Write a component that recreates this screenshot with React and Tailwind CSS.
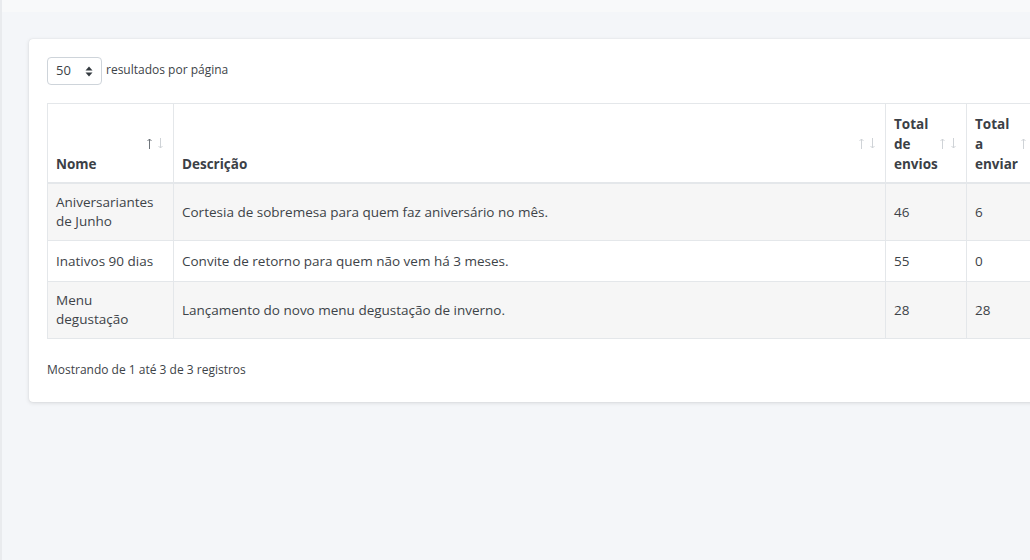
const rows = [
  { nome: 'Aniversariantes de Junho', descricao: 'Cortesia de sobremesa para quem faz aniversário no mês.', envios: 46, enviar: 6 },
  { nome: 'Inativos 90 dias', descricao: 'Convite de retorno para quem não vem há 3 meses.', envios: 55, enviar: 0 },
  { nome: 'Menu degustação', descricao: 'Lançamento do novo menu degustação de inverno.', envios: 28, enviar: 28 },
];

function Arrow({ down, color }) {
  return (
    <svg width="5" height="11" viewBox="0 0 5 11" className={color} fill="none" stroke="currentColor" strokeWidth="1">
      {down ? (
        <>
          <path d="M2.5 0 V10" />
          <path d="M0.5 8 L2.5 10 L4.5 8" />
        </>
      ) : (
        <>
          <path d="M2.5 1 V11" />
          <path d="M0.5 3 L2.5 1 L4.5 3" />
        </>
      )}
    </svg>
  );
}

function SortArrows({ active }) {
  return (
    <span className="absolute right-[10px] top-[34px] flex gap-[6px]">
      <Arrow color={active ? 'text-[#6f757b]' : 'text-[#cfd3d7]'} />
      <Arrow down color="text-[#cfd3d7]" />
    </span>
  );
}

function HeadCell({ children, active }) {
  return (
    <th className="relative border border-[#e4e7ea] border-b-2 pl-[8px] pr-[30px] pt-[10px] pb-[8px] text-left align-bottom font-bold leading-[20px] text-[#3b4046]">
      {children}
      <SortArrows active={active} />
    </th>
  );
}

export default function App() {
  return (
    <div
      className="flex h-[560px] w-[1030px] overflow-hidden bg-[#f4f6f9] text-[#3d4348]"
      style={{ fontFamily: '"Open Sans", "Noto Sans", sans-serif' }}
    >
      <div className="w-[2px] shrink-0 bg-[#e9ebee]" />
      <div className="flex min-w-0 flex-1 flex-col">
        <div className="h-[12px] shrink-0 bg-[#f8f9fa]" />
        <div className="pl-[27px] pt-[27px]">
          <div className="w-[1060px] rounded-[4px] bg-white px-[18px] pt-[18px] pb-[23px] shadow-[0_0_1px_rgba(0,0,0,0.13),0_1px_4px_rgba(0,0,0,0.12)]">
            <div className="flex items-center gap-[4px] text-[12px]">
              <div className="flex h-[28px] w-[55px] items-center justify-between rounded-[4px] border border-[#ced4da] pl-[8px] pr-[8px] text-[13px]">
                <span>50</span>
                <svg width="8" height="11" viewBox="0 0 8 11" className="fill-[#343a40]">
                  <path d="M4 0.5 L7.5 4.5 H0.5 Z" />
                  <path d="M4 10.5 L7.5 6.5 H0.5 Z" />
                </svg>
              </div>
              <span className="-mt-[3px]">resultados por página</span>
            </div>

            <table className="mt-[18px] w-[1042px] table-fixed border-collapse text-[13.5px] leading-[19px]">
              <colgroup>
                <col className="w-[126px]" />
                <col className="w-[712px]" />
                <col className="w-[81px]" />
                <col className="w-[81px]" />
                <col />
              </colgroup>
              <thead>
                <tr className="h-[78px]">
                  <HeadCell active>Nome</HeadCell>
                  <HeadCell>Descrição</HeadCell>
                  <HeadCell>Total de envios</HeadCell>
                  <HeadCell>Total a enviar</HeadCell>
                  <th className="border border-[#e4e7ea] border-b-2" />
                </tr>
              </thead>
              <tbody>
                {rows.map((r, i) => (
                  <tr key={r.nome} className={`h-[41px] ${i % 2 === 0 ? 'bg-[#f6f6f6]' : 'bg-white'}`}>
                    <td className="border border-[#e4e7ea] px-[8px] py-[9px] align-middle">
                      <span className="block w-[104px]">{r.nome}</span>
                    </td>
                    <td className="border border-[#e4e7ea] px-[8px] py-[9px] align-middle">{r.descricao}</td>
                    <td className="border border-[#e4e7ea] px-[8px] py-[9px] align-middle">{r.envios}</td>
                    <td className="border border-[#e4e7ea] px-[8px] py-[9px] align-middle">{r.enviar}</td>
                    <td className="border border-[#e4e7ea]" />
                  </tr>
                ))}
              </tbody>
            </table>

            <div className="mt-[22px] text-[12px]">Mostrando de 1 até 3 de 3 registros</div>
          </div>
        </div>
      </div>
    </div>
  );
}
